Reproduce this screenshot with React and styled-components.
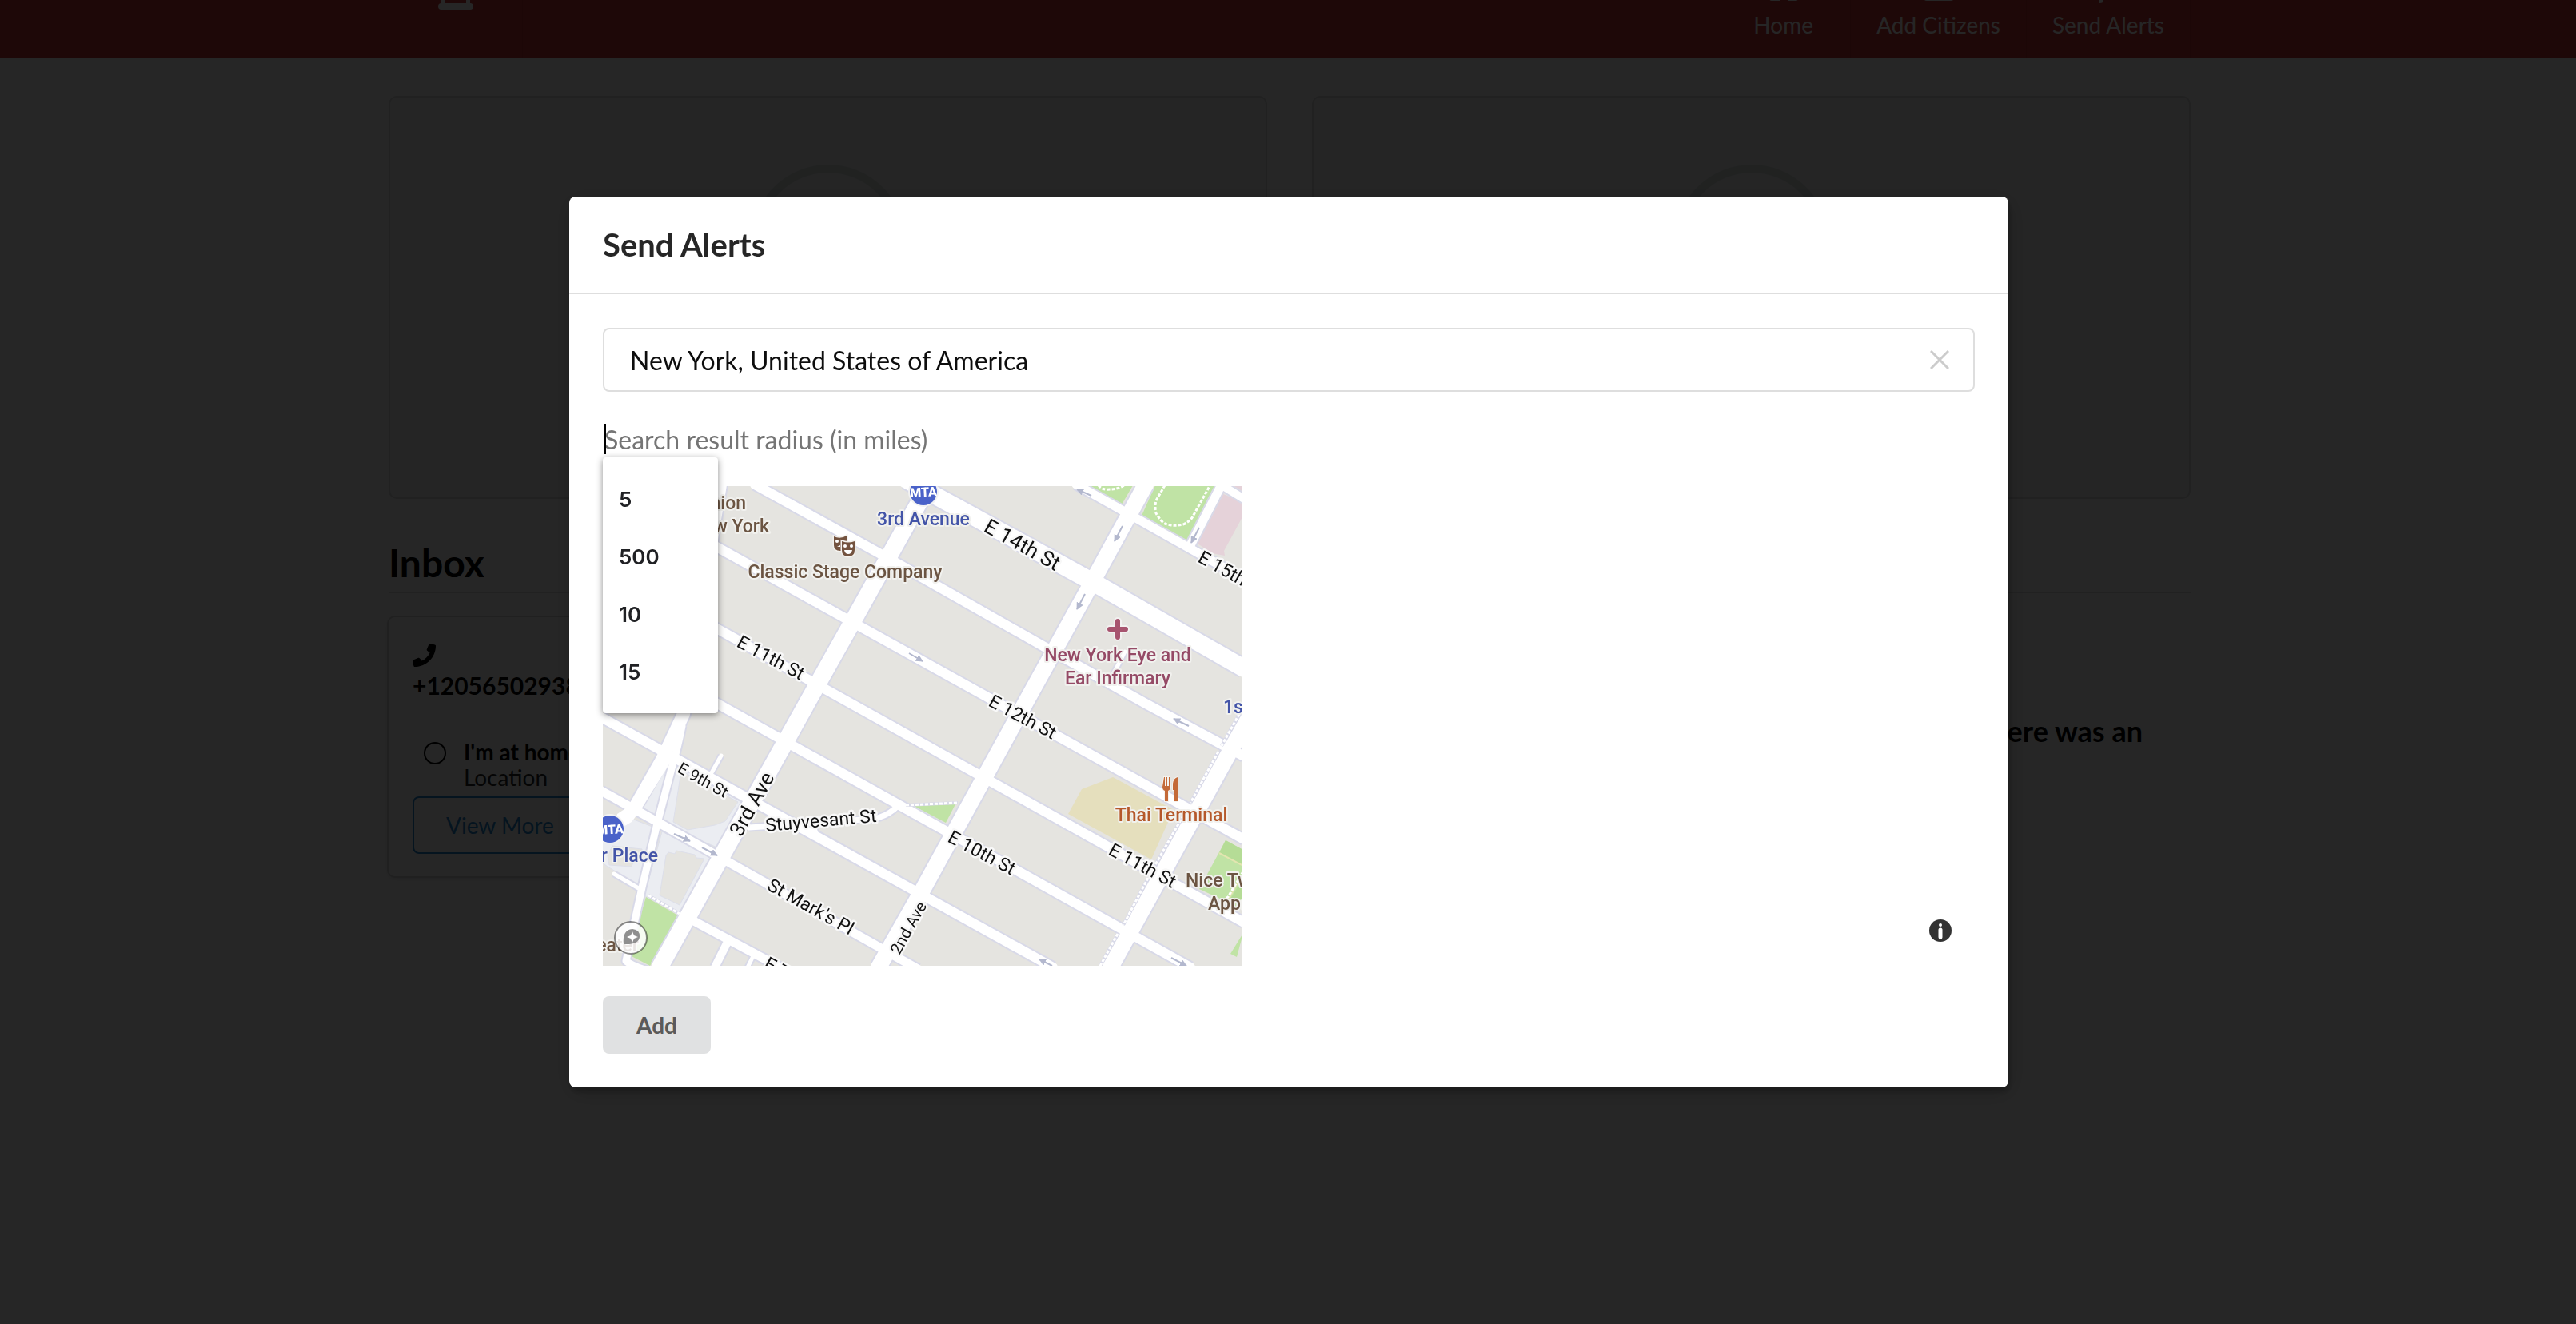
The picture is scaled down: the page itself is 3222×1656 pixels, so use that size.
import React from "react";
import styled, { createGlobalStyle } from "styled-components";
import { FaPhone } from "react-icons/fa";

const RADIUS_OPTIONS = ["5", "500", "10", "15"];

// street centre lines, wide ones are avenues
const STREETS = [
  { d: "M190 -2 L353 88 L554 202 L679 272 L802 338", w: 12 },
  { d: "M-2 -4 L144 77 L802 442", w: 12 },
  { d: "M-2 98 L144 179 L802 546", w: 12 },
  { d: "M-2 191 L735 602", w: 12 },
  { d: "M-2 289 L563 602", w: 12 },
  { d: "M-2 381 L68 420 L394 604", w: 11 },
  { d: "M110 542 L222 602", w: 11 },
  { d: "M156 570 L140 602", w: 10 },
  { d: "M188 588 L181 602", w: 5 },
  { d: "M592 -2 L802 116", w: 11 },
  { d: "M776 0 L802 16", w: 10 },
  { d: "M774 -2 L734 76", w: 11 },
  { d: "M14 485 L48 505", w: 5 },
  { d: "M134 362 L148 337", w: 5 },
  { d: "M636 240 L653 207", w: 5 },
  { d: "M183 427 L199 426 L339 416 Q356 413 369 400", w: 7 },
  { d: "M264 425 L267 437", w: 6 },
  { d: "M99 300 Q93 330 86 353 L68 422 L49 502 L29 594 Q36 600 56 606", w: 9 },
  { d: "M147 -2 L101 285 L74 342 L38 405", w: 16 },
  { d: "M71 602 L255 272 L310 174 L407 0", w: 21 },
  { d: "M345 602 L400 505 L528 272 L611 122 L679 -2", w: 20 },
  { d: "M635 602 L786 329 L824 262", w: 20 },
  { d: "M380 -8 L416 12 L611 119 L802 228", w: 22 },
];

const ARROWS = [
  [383, 209, 400, 219],
  [611, 12, 593, 4],
  [650, 50, 640, 69],
  [603, 135, 593, 154],
  [746, 52, 736, 71],
  [733, 300, 714, 291],
  [562, 600, 546, 592],
  [711, 590, 730, 600],
  [89, 435, 109, 444],
  [124, 452, 143, 462],
];

const STREET_NAMES = [
  { text: "E 14th St", x: 475, y: 56, r: 29, size: 26 },
  { text: "E 15th St", x: 743, y: 94, r: 29, size: 23 },
  { text: "E 11th St", x: 166, y: 200, r: 28, size: 23 },
  { text: "E 12th St", x: 481, y: 274, r: 28, size: 23 },
  { text: "E 10th St", x: 430, y: 444, r: 28, size: 23 },
  { text: "E 11th St", x: 631, y: 460, r: 28, size: 23 },
  { text: "E 9th St", x: 92, y: 357, r: 29, size: 20 },
  { text: "3rd Ave", x: 173, y: 440, r: -61, size: 26 },
  { text: "Stuyvesant St", x: 204, y: 432, r: -5, size: 23 },
  { text: "St Mark's Pl", x: 204, y: 504, r: 29, size: 23 },
  { text: "2nd Ave", x: 371, y: 587, r: -61, size: 20 },
  { text: "E 7th St", x: 200, y: 602, r: 29, size: 23 },
];

const PLACES = [
  { text: "Union", x: 179, y: 29, color: "#6b5442", anchor: "end" },
  { text: "New York", x: 208, y: 58, color: "#6b5442", anchor: "end" },
  { text: "Classic Stage Company", x: 303, y: 115, color: "#6b5442", anchor: "middle" },
  { text: "3rd Avenue", x: 401, y: 49, color: "#4354a8", anchor: "middle" },
  { text: "New York Eye and", x: 644, y: 219, color: "#954a66", anchor: "middle" },
  { text: "Ear Infirmary", x: 644, y: 248, color: "#954a66", anchor: "middle" },
  { text: "1st Avenue", x: 776, y: 284, color: "#4354a8", anchor: "start" },
  { text: "Thai Terminal", x: 711, y: 419, color: "#b5582a", anchor: "middle" },
  { text: "Nice Two", x: 729, y: 501, color: "#6b5442", anchor: "start" },
  { text: "Apparel", x: 757, y: 530, color: "#6b5442", anchor: "start" },
  { text: "Astor Place", x: 69, y: 470, color: "#4354a8", anchor: "end" },
  { text: "Theater", x: 45, y: 582, color: "#6b5442", anchor: "end" },
];

const Station = ({ x, y }) => (
  <g transform={`translate(${x} ${y})`}>
    <circle r="19" fill="#f2f2f2" />
    <circle r="17" fill="#4a62c9" />
    <text y="6" textAnchor="middle" fontSize="16" fontWeight="900" fill="#fff" transform="rotate(-3)">MTA</text>
  </g>
);

const Masks = () => (
  <g>
    <g stroke="#f4f2ee" strokeWidth="3" paintOrder="stroke" fill="#74533f">
      <path d="M289 63 Q297 67 305 62 V74 Q305 81 297 81 Q289 81 289 74z" />
      <path d="M299 69 Q307 72 315 69 V80 Q315 88 307 88 Q299 88 299 80z" />
    </g>
    <g fill="#fff">
      <circle cx="293" cy="69" r="2" />
      <circle cx="303" cy="75" r="2" />
      <circle cx="311" cy="75" r="2" />
      <path d="M302 80 H312 Q311 85 307 85 Q303 85 302 80z" />
      <path d="M293 76 L297 74 L297 76z" />
    </g>
  </g>
);

const StreetMap = () => (
  <MapSvg viewBox="0 0 800 600" role="img" aria-label="Map of New York">
    <defs>
      <marker id="arrow" viewBox="0 0 10 10" refX="9" refY="5" markerWidth="9" markerHeight="9" markerUnits="userSpaceOnUse" orient="auto">
        <path d="M0 0 L10 5 L0 10z" fill="#b3b8ce" />
      </marker>
    </defs>
    <rect width="800" height="600" fill="#e5e4e0" />

    {/* plazas */}
    <g fill="#ebedf2" stroke="#dddfea" strokeWidth="1">
      <path d="M86 342 L48 404 L68 412 L92 350z" />
      <path d="M92 350 L173 395 L143 452 L73 422z" />
      <path d="M74 432 L135 464 L96 536 L52 512z" />
      <path d="M-2 430 L26 412 L62 426 L46 500 L6 476 L-2 470z" />
      <g fill="#e5e4e0">
        <path d="M98 356 L169 395 L153 419 L140 424 L106 430 L88 420z" />
        <path d="M79 462 L82 458 L90 460 L92 456 L115 461 L117 465 L127 466 L96 524 L71 512z" />
        <path d="M6 462 L12 450 L49 454 L49 468 L38 470 L36 476 L8 474z" />
      </g>
    </g>

    {/* parks, hospital and school grounds */}
    <g fill="#c0e3a5">
      <path d="M54 514 L94 537 L59 600 L32 586z" />
      <path d="M389 400 L441 398 L429 421z" />
      <path d="M607 -1 L663 -1 L649 23z" />
      <path d="M691 -1 L768 -1 L731 68 L674 37z" />
      <path d="M779 443 L801 455 L801 530 L774 517 L746 504z" />
      <path d="M801 559 L793 589 L785 585z" />
    </g>
    <path d="M779 443 L801 455 L801 474 L771 459z M801 490 L784 518 L801 526z" fill="#b5dc96" />
    <path d="M771 459 L801 475 M801 484 L782 518" stroke="#e3e5b0" strokeWidth="2" />
    <path d="M776 10 L801 20 L801 37 L777 81 L778 87 L762 84 L744 72z M788 -1 L801 -1 L801 7z" fill="#e5d2d9" />
    <path d="M638 364 L714 405 L686 467 L582 410 L599 379z" fill="#e5dfbd" />

    {STREETS.map((s) => (
      <path key={"c" + s.d} d={s.d} fill="none" stroke="#d8d9e8" strokeWidth={s.w + 4} strokeLinejoin="round" />
    ))}
    {STREETS.map((s) => (
      <path key={s.d} d={s.d} fill="none" stroke="#fff" strokeWidth={s.w} strokeLinejoin="round" strokeLinecap="round" />
    ))}
    <path d="M79 334 L88 340 L48 404 L36 420 L12 434 L18 410 L33 400z" fill="#fff" />

    {/* foot paths */}
    <g fill="none" stroke="#d8d9e8" strokeWidth="4">
      <path d="M796 285 L774 325 M770 332 L735 396 M726 412 L688 479 M682 490 L651 549 M644 560 L621 602" />
      <path d="M379 399 L444 396 M57 512 L96 535" />
    </g>
    <g fill="none" stroke="#fff" strokeWidth="3" strokeDasharray="4 2">
      <path d="M796 285 L774 325 M770 332 L735 396 M726 412 L688 479 M682 490 L651 549 M644 560 L621 602" />
      <path d="M379 399 L444 396 M57 512 L96 535" />
      <path d="M703 -1 L692 18 Q690 26 692 34 Q698 44 703 47 Q714 51 726 48 Q735 44 738 38 L759 0" />
      <path d="M620 -1 Q624 5 634 4 Q644 4 652 -1 M801 482 L782 514 L774 520" />
    </g>

    {ARROWS.map(([x1, y1, x2, y2]) => (
      <line key={`${x1}-${y1}`} x1={x1} y1={y1} x2={x2} y2={y2} stroke="#b3b8ce" strokeWidth="2" markerEnd="url(#arrow)" />
    ))}

    {STREET_NAMES.map((s) => (
      <StreetName key={`${s.text}${s.x}`} fontSize={s.size} transform={`translate(${s.x} ${s.y}) rotate(${s.r})`}>
        {s.text}
      </StreetName>
    ))}
    {PLACES.map((p) => (
      <PlaceName key={p.text} x={p.x} y={p.y} fill={p.color} textAnchor={p.anchor}>
        {p.text}
      </PlaceName>
    ))}

    <Station x={401} y={7} />
    <Station x={9} y={429} />
    <Masks />

    <g fill="none" strokeLinecap="round">
      <path d="M644 169 V189 M634 179 H654" stroke="#f2f0f0" strokeWidth="10" />
      <path d="M644 169 V189 M634 179 H654" stroke="#a7546f" strokeWidth="6" />
    </g>
    <path
      d="M702 364 h1 v11 h2 v-11 h1 v11 h2 v-11 h1 l1 12 q0 4 -3 5 v13 h-4 v-13 q-3 -1 -3 -5z M719 364 v30 h-4 v-14 h-2 v-8 q1 -7 6 -8z"
      fill="#c46a38"
      stroke="#f4f2ee"
      strokeWidth="2"
      paintOrder="stroke"
    />

    {/* compact map logo */}
    <circle cx="35" cy="565" r="20" fill="#fff" fillOpacity=".85" stroke="#000" strokeOpacity=".45" strokeWidth="2" />
    <path d="M26 573 Q24 555 37 554 Q47 555 46 564 Q45 574 26 573z" fill="#8f8f8f" />
    <path d="M37 557 l2 5 l5 2 l-5 2 l-2 5 l-2 -5 l-5 -2 l5 -2z" fill="#fff" />
  </MapSvg>
);

const App = () => {
  const [location, setLocation] = React.useState("New York, United States of America");
  const [radius, setRadius] = React.useState("");
  const [showOptions, setShowOptions] = React.useState(true);

  const handlePick = (value) => {
    setRadius(value);
    setShowOptions(false);
  };

  return (
    <>
      <GlobalStyle />
      <Page>
        <Nav>
          <NavInner>
            <NavItem href="#top" aria-label="Alerts" $logo>
              <svg width="44" height="44" viewBox="0 0 44 44" fill="#fff">
                <path d="M4 0 h5 v36 h26 v-36 h5 v36 q4 0 4 4 q0 4 -4 4 h-36 q-4 0 -4 -4 q0 -4 4 -4z" />
              </svg>
            </NavItem>
            <NavMenu>
              <NavItem href="#home">
                <svg width="60" height="44" viewBox="0 0 60 44" fill="#fff">
                  <path d="M30 2 L58 26 L54 30 L48 25 V41 Q48 44 45 44 H35 V30 H25 V44 H15 Q12 44 12 41 V25 L6 30 L2 26z" />
                </svg>
                Home
              </NavItem>
              <NavItem href="#citizens">
                <svg width="40" height="44" viewBox="0 0 40 44" fill="#fff">
                  <circle cx="20" cy="12" r="11" />
                  <path d="M1 40 Q1 26 12 26 H28 Q39 26 39 40 Q39 44 35 44 H5 Q1 44 1 40z" />
                </svg>
                Add Citizens
              </NavItem>
              <NavItem href="#alerts">
                <svg width="44" height="44" viewBox="0 0 44 44" fill="#fff" overflow="visible">
                  <path d="M2 10 H24 L40 0 V36 L24 26 H16 V44 Q16 47 11 47 V26 H2z" />
                </svg>
                Send Alerts
              </NavItem>
            </NavMenu>
          </NavInner>
        </Nav>

        <Container>
          <Panels>
            {[0, 1].map((i) => (
              <Panel key={i}>
                <Ring />
              </Panel>
            ))}
          </Panels>

          <InboxTitle>Inbox</InboxTitle>
          <InboxRow>
            <Card>
              <FaPhone size={29} />
              <CardNumber>+12056502938</CardNumber>
              <Reply>
                <ReplyRadio type="radio" id="reply" name="reply" />
                <label htmlFor="reply">
                  <ReplyText>I'm at home</ReplyText>
                  <ReplyMeta>Location</ReplyMeta>
                </label>
              </Reply>
              <ViewMore type="button">View More</ViewMore>
            </Card>
            <Notice>There was an</Notice>
          </InboxRow>
        </Container>
      </Page>

      <Dimmer>
        <Modal role="dialog" aria-labelledby="modal-title">
          <ModalHeader id="modal-title">Send Alerts</ModalHeader>
          <ModalBody>
            <SearchBox>
              <SearchInput
                type="text"
                aria-label="Location"
                value={location}
                onChange={(e) => setLocation(e.target.value)}
              />
              <ClearButton type="button" aria-label="Clear" onClick={() => setLocation("")}>
                <svg width="24" height="24" viewBox="0 0 24 24" stroke="#ccc" strokeWidth="3">
                  <path d="M1 1 L23 23 M23 1 L1 23" />
                </svg>
              </ClearButton>
            </SearchBox>

            <RadiusField>
              <RadiusInput
                type="text"
                aria-label="Search result radius"
                placeholder="Search result radius (in miles)"
                value={radius}
                onFocus={() => setShowOptions(true)}
                onChange={(e) => setRadius(e.target.value)}
              />
              {showOptions && (
                <>
                  <Caret />
                  <Options>
                    {RADIUS_OPTIONS.map((o) => (
                      <li key={o}>
                        <Option type="button" onClick={() => handlePick(o)}>{o}</Option>
                      </li>
                    ))}
                  </Options>
                </>
              )}
            </RadiusField>

            <MapBox>
              <StreetMap />
              <InfoButton type="button" aria-label="Map information">
                <svg width="30" height="30" viewBox="0 0 30 30">
                  <circle cx="15" cy="15" r="14" fill="#333" />
                  <circle cx="15" cy="8" r="2" fill="#fff" />
                  <path d="M15 14 V23" stroke="#fff" strokeWidth="5" strokeLinecap="round" />
                </svg>
              </InfoButton>
            </MapBox>

            <AddButton type="button">Add</AddButton>
          </ModalBody>
        </Modal>
      </Dimmer>
    </>
  );
};

export default App;

const GlobalStyle = createGlobalStyle`
  * {
    box-sizing: border-box;
  }
  body {
    margin: 0;
    overflow: hidden;
    background: #fff;
    color: #000;
    font-family: Lato, "Liberation Sans", sans-serif;
    font-size: 28px;
  }
  button, input {
    font-family: inherit;
  }
`;

const Page = styled.div`
  min-height: 100vh;
`;

const Nav = styled.nav`
  height: 72px;
  padding-left: 4px;
  overflow: hidden;
  background: #cb3535;
`;

const NavInner = styled.div`
  display: flex;
  justify-content: space-between;
  align-items: flex-end;
  height: 100%;
  max-width: 2254px;
  margin: 0 auto;
`;

const NavMenu = styled.div`
  display: flex;
`;

const NavItem = styled.a`
  display: flex;
  flex-direction: column;
  align-items: center;
  gap: 16px;
  min-width: 168px;
  padding: 0 32px ${(props) => (props.$logo ? 60 : 27)}px;
  border-right: 1px solid rgba(34, 36, 38, 0.1);
  color: #fff;
  font-size: 28px;
  line-height: 28px;
  text-decoration: none;
  white-space: nowrap;
`;

const Container = styled.main`
  max-width: 2254px;
  margin: 0 auto;
  padding-top: 48px;
`;

const Content = styled.div``;

const Panels = styled(Content)`
  display: grid;
  grid-template-columns: 1fr 1fr;
  gap: 56px;
  margin: 0 -2px 0 2px;
`;

const Panel = styled.section`
  display: flex;
  justify-content: center;
  height: 504px;
  padding-top: 84px;
  border: 2px solid #d9dadb;
  border-radius: 10px;
  background: #f3f4f5;
`;

const Ring = styled.div`
  width: 192px;
  height: 192px;
  border: 10px solid #dbe2df;
  border-radius: 50%;
`;

const InboxTitle = styled.h1`
  margin: 50px -2px 30px 2px;
  padding-bottom: 6px;
  border-bottom: 2px solid #dededf;
  font-size: 48px;
  font-weight: 700;
  line-height: 60px;
`;

const InboxRow = styled.div`
  display: flex;
  justify-content: space-between;
  align-items: flex-start;
  margin: 0 -2px 0 2px;
`;

const Card = styled.article`
  width: 580px;
  padding: 33px 30px 28px;
  border-radius: 8px;
  background: #fff;
  box-shadow: 0 2px 6px #d4d4d5, 0 0 0 2px #d4d4d5;
`;

const CardNumber = styled.div`
  font-size: 30px;
  font-weight: 700;
  line-height: 34px;
`;

const Reply = styled.div`
  display: flex;
  align-items: flex-start;
  gap: 22px;
  margin: 50px 0 8px 14px;
`;

const ReplyRadio = styled.input`
  appearance: none;
  width: 28px;
  height: 28px;
  margin: 4px 0 0;
  border: 2px solid #000;
  border-radius: 50%;
`;

const ReplyText = styled.div`
  font-weight: 700;
  line-height: 32px;
`;

const ReplyMeta = styled.div`
  color: #222;
  line-height: 32px;
`;

const ViewMore = styled.button`
  height: 72px;
  padding: 0 40px;
  border: 2px solid #2185d0;
  border-radius: 8px;
  background: #fff;
  color: #2185d0;
  font-size: 28px;
`;

const Notice = styled.h3`
  margin: 120px 60px 0 0;
  font-size: 36px;
  font-weight: 700;
  line-height: 44px;
`;

const Dimmer = styled.div`
  position: fixed;
  inset: 0;
  display: flex;
  justify-content: center;
  align-items: flex-start;
  padding: 246px 0 0 2px;
  background: rgba(0, 0, 0, 0.85);
`;

const Modal = styled.div`
  width: 100%;
  max-width: 1800px;
  border-radius: 8px;
  background: #fff;
  box-shadow: 2px 6px 6px rgba(0, 0, 0, 0.2), 2px 6px 30px rgba(0, 0, 0, 0.2);
`;

const ModalHeader = styled.h2`
  margin: 0;
  padding: 35px 42px;
  border-bottom: 2px solid #dedede;
  color: rgba(0, 0, 0, 0.85);
  font-size: 40px;
  font-weight: 700;
  line-height: 50px;
`;

const ModalBody = styled.div`
  padding: 42px;
`;

const SearchBox = styled.div`
  display: flex;
  align-items: center;
  height: 80px;
  padding: 0 30px 0 32px;
  border: 2px solid #dedede;
  border-radius: 8px;
`;

const SearchInput = styled.input`
  flex: 1;
  min-width: 0;
  padding: 0;
  border: none;
  outline: none;
  color: rgba(0, 0, 0, 0.95);
  font-size: 32px;
`;

const ClearButton = styled.button`
  display: flex;
  padding: 0;
  border: none;
  background: none;
`;

const RadiusField = styled.div`
  position: relative;
  margin: 36px 0;
`;

const RadiusInput = styled.input`
  display: block;
  width: 100%;
  height: 46px;
  padding: 0 2px;
  border: none;
  outline: none;
  font-size: 32px;

  &::placeholder {
    color: #757575;
  }
`;

const Caret = styled.span`
  position: absolute;
  top: 4px;
  left: 2px;
  width: 2px;
  height: 38px;
  background: #000;
`;

const Options = styled.ul`
  position: absolute;
  top: 100%;
  left: 0;
  z-index: 1;
  width: 144px;
  margin: 0;
  padding: 16px 0;
  border-radius: 4px;
  background: #fff;
  box-shadow: 0 2px 8px rgba(0, 0, 0, 0.45);
  list-style: none;
`;

const Option = styled.button`
  display: block;
  width: 100%;
  height: 72px;
  padding: 0 20px;
  border: none;
  background: none;
  color: #202124;
  font-family: Inter, "Liberation Sans", sans-serif;
  font-size: 26px;
  font-weight: 600;
  text-align: left;
`;

const MapBox = styled.div`
  display: flex;
  justify-content: space-between;
  align-items: flex-end;
`;

const MapSvg = styled.svg`
  display: block;
  width: 800px;
  height: 600px;
  font-family: Roboto, "Liberation Sans", sans-serif;
`;

const StreetName = styled.text`
  fill: #111;
  stroke: #f8f8f8;
  stroke-width: 5px;
  stroke-linejoin: round;
  paint-order: stroke;
`;

const PlaceName = styled.text`
  font-size: 23px;
  font-weight: 500;
  stroke: #f1f1ee;
  stroke-width: 4px;
  stroke-linejoin: round;
  paint-order: stroke;
`;

const InfoButton = styled.button`
  display: flex;
  margin: 0 28px 29px 0;
  padding: 0;
  border: none;
  background: none;
`;

const AddButton = styled.button`
  height: 72px;
  margin-top: 38px;
  padding: 0 42px;
  border: none;
  border-radius: 8px;
  background: #e0e1e2;
  color: #5a5a5a;
  font-size: 28px;
  font-weight: 700;
`;
